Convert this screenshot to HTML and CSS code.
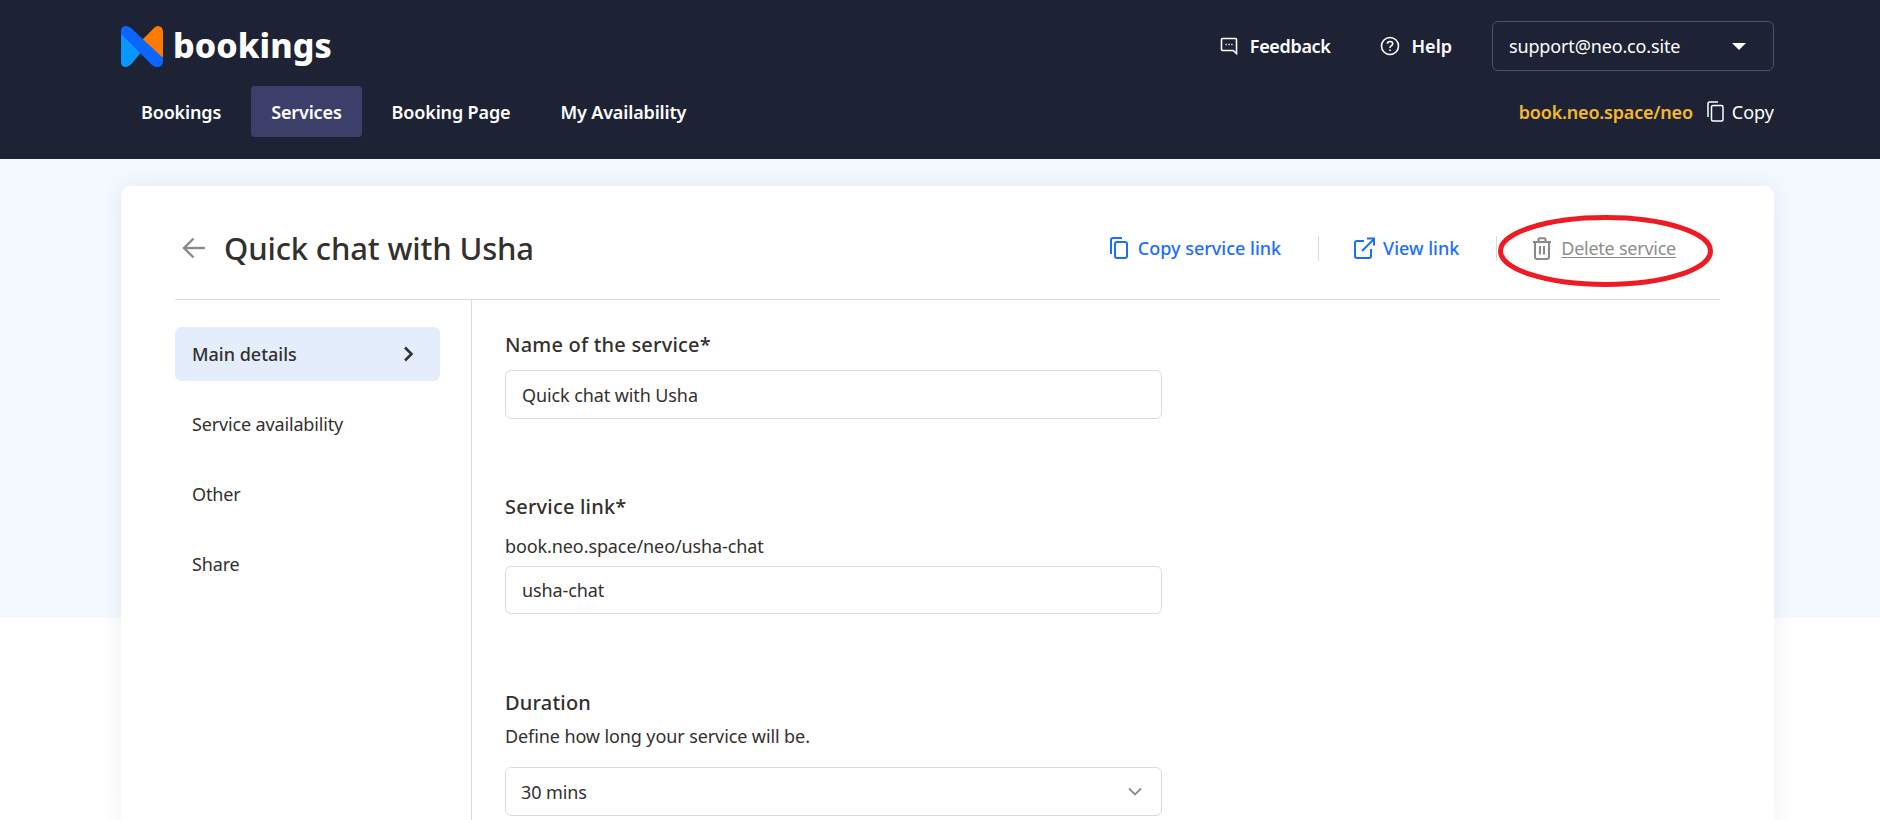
FILE: index.html
```html
<!DOCTYPE html>
<html lang="en">
<head>
<meta charset="utf-8">
<title>Quick chat with Usha</title>
<link rel="stylesheet" href="styles.css">
</head>
<body>
<header class="header">
  <div class="row-top">
    <div class="logo">
      <svg class="logo-mark" width="42" height="41" viewBox="0 0 42 41">
        <path fill="#ff7a00" d="M20 15 L33 2 Q36 -1 39 .6 Q42 2 42 6 V32 Z"/>
        <path fill="#0a96ff" d="M0 8 L22 24 L10 38.500 Q7 41 4 41 Q0 40.500 0 36 Z"/>
        <path fill="#0a66ff" d="M0 5 Q0 0 5 0 Q8 0 10.500 2.500 L41 31 Q42 32.500 42 35 Q42 41 36 41 Q33 41 30.500 38.500 L0 8 Z"/>
      </svg>
      <span class="logo-text">bookings</span>
    </div>
    <div class="top-actions">
      <a class="top-link feedback">
        <svg width="18" height="18" viewBox="0 0 18 18" fill="none" stroke="#fff" stroke-width="1.600"><path d="M2.500 1.500 H15.500 Q16.500 1.500 16.500 2.500 V16.500 L13 13.500 H2.500 Q1.500 13.500 1.500 12.500 V2.500 Q1.500 1.500 2.500 1.500 Z"/><path d="M5.500 7.500 H6.800 M8.400 7.500 H9.700 M11.300 7.500 H12.600"/></svg>
        <span>Feedback</span>
      </a>
      <a class="top-link help">
        <svg width="20" height="20" viewBox="0 0 20 20" fill="none" stroke="#fff" stroke-width="1.600"><circle cx="10" cy="10" r="8.500"/><path d="M7.300 7.800 Q7.400 5.500 10 5.500 Q12.700 5.500 12.700 7.700 Q12.700 9 11.300 9.800 Q10 10.500 10 12"/><path d="M10 13.500 V15"/></svg>
        <span>Help</span>
      </a>
      <div class="account">
        <span>support@neo.co.site</span>
        <span class="caret"></span>
      </div>
    </div>
  </div>
  <div class="row-nav">
    <nav class="nav">
      <a class="nav-item">Bookings</a>
      <a class="nav-item is-active">Services</a>
      <a class="nav-item">Booking Page</a>
      <a class="nav-item">My Availability</a>
    </nav>
    <div class="page-link">
      <span class="page-url">book.neo.space/neo</span>
      <svg width="17" height="21" viewBox="0 0 17 21" fill="none" stroke="#fff" stroke-width="1.500"><path d="M1 16 V2.500 Q1 1 2.500 1 H11"/><rect x="4.500" y="4.500" width="11.500" height="15.500" rx="1.500"/></svg>
      <span class="page-copy">Copy</span>
    </div>
  </div>
</header>

<main class="page">
  <section class="card">
    <div class="title-row">
      <div class="title-left">
        <svg class="back" width="24" height="22" viewBox="0 0 24 22" fill="none" stroke="#8a8a8a" stroke-width="2.400"><path d="M23 11 H2"/><path d="M11.500 1.500 L2 11 L11.500 20.500"/></svg>
        <h1 class="title">Quick chat with Usha</h1>
      </div>
      <div class="actions">
        <a class="action copy-action">
          <svg width="18" height="22" viewBox="0 0 18 22" fill="none" stroke="#1a6dff" stroke-width="2"><path d="M1 17 V3 Q1 1 3 1 H12"/><rect x="5" y="5" width="12" height="16" rx="2"/></svg>
          <span>Copy service link</span>
        </a>
        <span class="action-sep"></span>
        <a class="action view-action">
          <svg width="21" height="22" viewBox="0 0 21 22" fill="none" stroke="#1a6dff" stroke-width="2"><path d="M10 4 H3 Q1 4 1 6 V19 Q1 21 3 21 H15 Q17 21 17 19 V12"/><path d="M8 14 L20 2"/><path d="M13 1.500 H20 V8.500"/></svg>
          <span>View link</span>
        </a>
        <span class="action-sep"></span>
        <a class="action delete-action">
          <svg width="20" height="23" viewBox="0 0 20 23" fill="none" stroke="#8a8a8a" stroke-width="2.100"><path d="M1 5 H19"/><path d="M6.500 5 V2.500 Q6.500 1.200 7.800 1.200 H12.200 Q13.500 1.200 13.500 2.500 V5"/><path d="M3 5 V20 Q3 22 5 22 H15 Q17 22 17 20 V5"/><path d="M8 9 V17.500 M12 9 V17.500"/></svg>
          <span class="delete-text">Delete service</span>
        </a>
      </div>
    </div>
    <div class="body">
      <aside class="side">
        <a class="side-item is-current">
          <span>Main details</span>
          <svg width="11" height="16" viewBox="0 0 11 16" fill="none" stroke="#333" stroke-width="2.600"><path d="M2 1.500 L8.500 8 L2 14.500"/></svg>
        </a>
        <a class="side-item">Service availability</a>
        <a class="side-item">Other</a>
        <a class="side-item">Share</a>
      </aside>
      <div class="form">
        <div class="field field-name">
          <label class="label">Name of the service*</label>
          <div class="control">Quick chat with Usha</div>
        </div>
        <div class="field field-link">
          <label class="label">Service link*</label>
          <p class="hint">book.neo.space/neo/usha-chat</p>
          <div class="control">usha-chat</div>
        </div>
        <div class="field field-duration">
          <label class="label">Duration</label>
          <p class="hint">Define how long your service will be.</p>
          <div class="control select">
            <span>30 mins</span>
            <svg width="14" height="9" viewBox="0 0 14 9" fill="none" stroke="#8a8a8a" stroke-width="1.800"><path d="M1 1.500 L7 7.500 L13 1.500"/></svg>
          </div>
        </div>
      </div>
    </div>
  </section>
</main>

<svg class="annotation" width="220" height="76" viewBox="0 0 220 76" fill="none"><ellipse cx="109.500" cy="38" rx="105" ry="33.500" stroke="#ed1c24" stroke-width="5"/></svg>
</body>
</html>
```

FILE: styles.css
```css
* { box-sizing: border-box; }
html, body { margin: 0; height: 820px; overflow: hidden; }
body {
  font-family: "Noto Sans", "Liberation Sans", sans-serif;
  font-size: 18px;
  color: #33302e;
  background: #fff;
  position: relative;
}
a { color: inherit; text-decoration: none; }
h1, p { margin: 0; }

.header {
  height: 159px;
  background: #1e2235;
  padding: 21px 106px 0 121px;
  color: #fff;
}
.row-top { display: flex; justify-content: space-between; align-items: center; height: 50px; }
.logo { display: flex; align-items: center; gap: 10px; }
.logo-mark { display: block; }
.logo-text { font-size: 34px; font-weight: 800; line-height: 41px; letter-spacing: .1px; padding-bottom: 2px; }
.top-actions { display: flex; align-items: center; }
.top-link { display: flex; align-items: center; gap: 12px; font-weight: 600; font-size: 18px; }
.top-link svg { display: block; }
.feedback { margin-right: 49px; letter-spacing: -.35px; }
.help { margin-right: 40px; }
.account {
  width: 282px; height: 50px;
  border: 1px solid #4d4f78;
  border-radius: 6px;
  display: flex; align-items: center; justify-content: space-between;
  padding: 0 27px 0 16px;
  font-size: 18px;
  letter-spacing: -.15px;
}
.caret { width: 0; height: 0; border-left: 7px solid transparent; border-right: 7px solid transparent; border-top: 7px solid #fff; }

.row-nav { display: flex; justify-content: space-between; align-items: center; margin-top: 15px; }
.nav { display: flex; gap: 10px; }
.nav-item {
  height: 51px; padding: 0 20px;
  display: flex; align-items: center;
  font-weight: 600; font-size: 18px;
  letter-spacing: -.15px;
  border-radius: 4px;
}
.nav-item.is-active { background: #3d3f6b; }
.page-link { display: flex; align-items: center; }
.page-url { color: #f5b82e; font-weight: 600; margin-right: 14px; letter-spacing: -.2px; }
.page-copy { margin-left: 8px; }

.page {
  height: 661px;
  padding: 27px 106px 0 121px;
  background: linear-gradient(#f4f8ff 459px, #fff 459px);
}
.card {
  height: 640px;
  background: #fff;
  border-radius: 10px;
  padding: 0 54px;
  box-shadow: 0 0 24px rgba(30, 40, 80, .07);
}
.title-row {
  height: 114px;
  display: flex; justify-content: space-between; align-items: center;
  border-bottom: 1px solid #dcdcdc;
  padding: 11px 44px 0 7px;
}
.title-left { display: flex; align-items: center; gap: 18px; }
.back { display: block; }
.title { font-size: 31px; font-weight: 500; line-height: 44px; letter-spacing: -.15px; color: #33302e; }
.actions { display: flex; align-items: center; }
.action { display: flex; align-items: center; gap: 10px; font-weight: 500; font-size: 18px; color: #1a6dff; }
.action svg { display: block; }
.action-sep { width: 1px; height: 25px; background: #dcdcdc; }
.copy-action { margin-right: 37px; }
.view-action { margin: 0 37px 0 35px; gap: 8px; }
.delete-action { margin-left: 35px; color: #8d8d8d; font-weight: 400; gap: 9px; letter-spacing: -.25px; }
.delete-text { text-decoration: underline; text-underline-offset: 2px; text-decoration-thickness: 1px; }

.body { display: flex; height: 520px; }
.side {
  width: 297px;
  border-right: 1px solid #dcdcdc;
  padding: 27px 31px 0 0;
  display: flex; flex-direction: column; gap: 16px;
  letter-spacing: -.15px;
}
.side-item {
  height: 54px; padding: 0 26px 0 17px;
  display: flex; align-items: center; justify-content: space-between;
  border-radius: 6px;
}
.side-item.is-current { background: #e4edfc; font-weight: 500; letter-spacing: 0; }
.side-item svg { display: block; }

.form { padding: 31px 0 0 33px; width: 690px; }
.label { display: block; font-size: 20px; font-weight: 500; line-height: 28px; letter-spacing: .2px; }
.hint { font-size: 18px; line-height: 26px; letter-spacing: -.1px; }
.control {
  height: 49px;
  border: 1px solid #dcdcdc;
  border-radius: 6px;
  display: flex; align-items: center;
  padding: 0 16px;
  font-size: 18px;
  letter-spacing: -.1px;
}
.field-name .control { margin-top: 11px; }
.field-link { margin-top: 74px; }
.field-link .hint { margin-top: 12px; }
.field-link .control { margin-top: 7px; height: 48px; }
.field-duration { margin-top: 75px; }
.field-duration .hint { margin-top: 6px; }
.field-duration .control { margin-top: 18px; }
.select { justify-content: space-between; padding: 0 19px 0 15px; }
.select svg { display: block; }

.annotation { position: absolute; left: 1496px; top: 213px; }
```
